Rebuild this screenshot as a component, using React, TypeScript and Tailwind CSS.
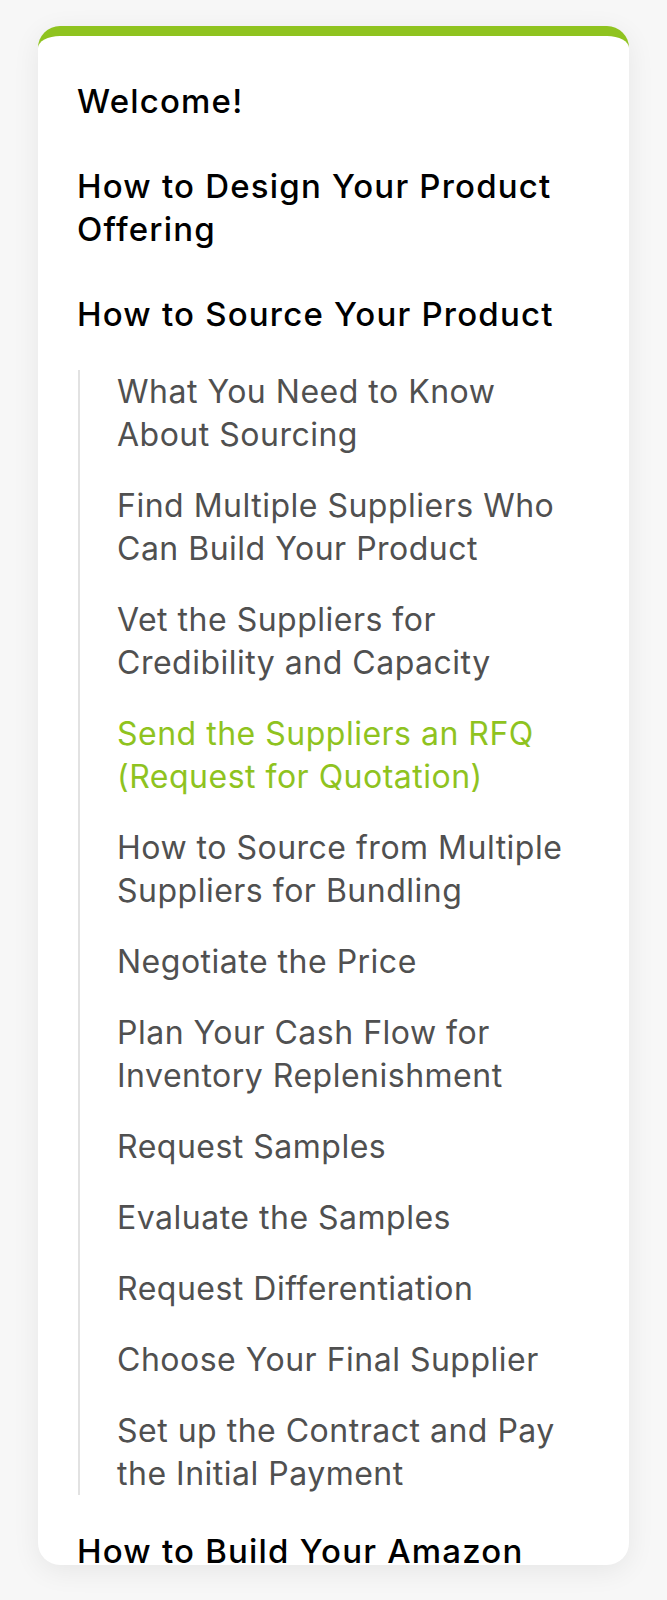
import React from 'react';

type Lesson = { title: string; active?: boolean };

const sourcingLessons: Lesson[] = [
  { title: 'What You Need to Know About Sourcing' },
  { title: 'Find Multiple Suppliers Who Can Build Your Product' },
  { title: 'Vet the Suppliers for Credibility and Capacity' },
  { title: 'Send the Suppliers an RFQ (Request for Quotation)', active: true },
  { title: 'How to Source from Multiple Suppliers for Bundling' },
  { title: 'Negotiate the Price' },
  { title: 'Plan Your Cash Flow for Inventory Replenishment' },
  { title: 'Request Samples' },
  { title: 'Evaluate the Samples' },
  { title: 'Request Differentiation' },
  { title: 'Choose Your Final Supplier' },
  { title: 'Set up the Contract and Pay the Initial Payment' },
];

const App = () => {
  return (
    <div className="min-h-screen bg-[#f7f7f7] pt-[26px] px-[38px] pb-[35px] font-['Inter',sans-serif]">
      {/* Carte du sommaire */}
      <div className="h-[1539px] overflow-hidden rounded-[22px] border-t-[10px] border-[#8fc31f] bg-white shadow-[0_6px_28px_rgba(0,0,0,0.07)]">
        <div className="pt-[44px] pl-[39px] pr-[60px] leading-[43px]">
          <div className="text-[33px] font-medium tracking-[1.2px] text-black">Welcome!</div>
          <div className="mt-[42px] text-[33px] font-medium tracking-[1.2px] text-black">How to Design Your Product Offering</div>
          <div className="mt-[42px] text-[33px] font-medium tracking-[1.2px] text-black">How to Source Your Product</div>

          <ul className="mt-[34px] ml-[1px] border-l-2 border-[#e2e2e2] pl-[37px] flex flex-col gap-[28px] text-[32px] tracking-[0.5px]">
            {sourcingLessons.map((lesson) => (
              <li
                key={lesson.title}
                className={lesson.active ? 'text-[#8fc31f]' : 'text-[#505050]'}
              >
                {lesson.title}
              </li>
            ))}
          </ul>

          <div className="mt-[35px] text-[33px] font-medium tracking-[1.2px] text-black">How to Build Your Amazon Listing</div>
        </div>
      </div>
    </div>
  );
};

export default App;
